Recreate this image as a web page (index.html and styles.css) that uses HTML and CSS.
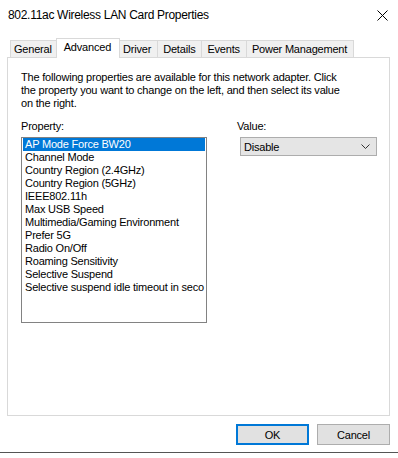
FILE: index.html
```html
<!DOCTYPE html>
<html>
<head>
<meta charset="utf-8">
<link rel="stylesheet" href="styles.css">
</head>
<body>
<div class="window">
  <div class="titlebar">
    <span class="title">802.11ac Wireless LAN Card Properties</span>
    <span class="close" aria-label="Close">
      <svg width="11" height="11" viewBox="0 0 11 11"><path d="M0.5 0.5 L10.5 10.5 M10.5 0.5 L0.5 10.5" stroke="#000" stroke-width="1" fill="none"/></svg>
    </span>
  </div>
  <div class="tabs">
    <div class="tab tab-first">General</div>
    <div class="tab active">Advanced</div>
    <div class="tab">Driver</div>
    <div class="tab">Details</div>
    <div class="tab">Events</div>
    <div class="tab">Power Management</div>
  </div>
  <div class="panel">
    <p class="desc">The following properties are available for this network adapter. Click the property you want to change on the left, and then select its value on the right.</p>
    <div class="cols">
      <div class="col-left">
        <div class="label">Property:</div>
        <div class="listbox">
          <div class="item selected">AP Mode Force BW20</div>
          <div class="item">Channel Mode</div>
          <div class="item">Country Region (2.4GHz)</div>
          <div class="item">Country Region (5GHz)</div>
          <div class="item">IEEE802.11h</div>
          <div class="item">Max USB Speed</div>
          <div class="item">Multimedia/Gaming Environment</div>
          <div class="item">Prefer 5G</div>
          <div class="item">Radio On/Off</div>
          <div class="item">Roaming Sensitivity</div>
          <div class="item">Selective Suspend</div>
          <div class="item">Selective suspend idle timeout in seco</div>
        </div>
      </div>
      <div class="col-right">
        <div class="label">Value:</div>
        <div class="combo">
          <span>Disable</span>
          <svg class="chev" width="9" height="5" viewBox="0 0 9 5"><path d="M0.5 0.5 L4.5 4.5 L8.5 0.5" stroke="#333" stroke-width="1" fill="none"/></svg>
        </div>
      </div>
    </div>
  </div>
  <div class="buttons">
    <button class="btn default">OK</button>
    <button class="btn">Cancel</button>
  </div>
  <div class="bottomline"></div>
</div>
</body>
</html>
```

FILE: styles.css
```css
html, body {
  margin: 0;
  padding: 0;
  background: #ffffff;
}
.window {
  width: 398px;
  height: 458px;
  background: #ffffff;
  font-family: "Liberation Sans", Arial, sans-serif;
  font-size: 11px;
  letter-spacing: -0.2px;
  color: #000;
  display: flex;
  flex-direction: column;
  overflow: hidden;
}
.titlebar {
  height: 30px;
  display: flex;
  align-items: center;
  justify-content: space-between;
  padding: 0 10px 0 8px;
}
.title {
  font-size: 12px;
  letter-spacing: -0.3px;
  color: #000;
}
.close {
  display: flex;
  width: 11px;
  height: 11px;
}
.tabs {
  display: flex;
  align-items: flex-end;
  height: 27px;
  padding-left: 10px;
  position: relative;
  z-index: 1;
}
.tab {
  height: 16px;
  line-height: 16px;
  padding: 0 6px 0 5px;
  background: #f0f0f0;
  border: 1px solid #d9d9d9;
  border-bottom: none;
  margin-left: -1px;
  white-space: nowrap;
}
.tab-first {
  margin-left: 0;
  padding: 0 5px 0 3px;
}
.tab.active {
  height: 19px;
  line-height: 16px;
  background: #ffffff;
  padding: 0 8px 0 7px;
  margin-left: -2px;
  margin-right: -2px;
  margin-bottom: -1px;
  position: relative;
  z-index: 2;
}
.panel {
  margin-left: 7px;
  width: 368px;
  height: 357px;
  border: 1px solid #d9d9d9;
  background: #ffffff;
  padding: 0 0 0 13px;
}
.desc {
  margin: 13px 0 0 0;
  width: 328px;
  line-height: 13px;
}
.cols {
  display: flex;
  margin-top: 10px;
}
.col-left {
  width: 186px;
}
.col-right {
  margin-left: 30px;
}
.label {
  line-height: 13px;
  height: 14px;
}
.listbox {
  margin-top: 3px;
  width: 184px;
  height: 184px;
  border: 1px solid #828282;
  background: #ffffff;
  overflow: hidden;
}
.item {
  height: 13px;
  line-height: 13px;
  padding-left: 2px;
  white-space: nowrap;
  margin: 0 1px;
}
.item.selected {
  background: #0078d7;
  color: #ffffff;
}
.combo {
  margin-top: 3px;
  margin-left: 3px;
  width: 137px;
  height: 19px;
  border: 1px solid #adadad;
  background: #e5e5e5;
  display: flex;
  align-items: center;
  justify-content: space-between;
  padding: 0 6px 0 3px;
  box-sizing: border-box;
}
.chev {
  display: block;
}
.buttons {
  display: flex;
  justify-content: flex-end;
  gap: 8px;
  padding-right: 8px;
  margin-top: 8px;
}
.btn {
  width: 73px;
  height: 21px;
  font-family: "Liberation Sans", Arial, sans-serif;
  font-size: 11px;
  letter-spacing: -0.2px;
  background: #e1e1e1;
  border: 1px solid #adadad;
  color: #000;
  padding: 0;
  margin: 0;
}
.btn.default {
  border: 2px solid #0078d7;
}
.bottomline {
  margin-top: 7px;
  height: 1px;
  background: #555555;
}
```
